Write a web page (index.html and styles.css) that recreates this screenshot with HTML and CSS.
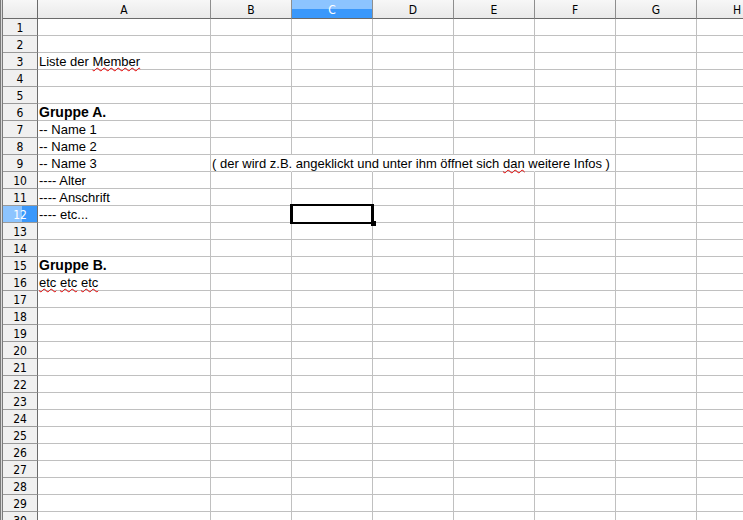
FILE: index.html
```html
<!DOCTYPE html>
<html lang="de">
<head>
    <meta charset="UTF-8">
    <title>Tabelle1</title>
    <link rel="stylesheet" href="styles.css">
</head>
<body>

<div class="sheet" id="sheet"></div>

<script>
    const spalten = ['A', 'B', 'C', 'D', 'E', 'F', 'G', 'H'];
    const anzahlZeilen = 30;
    const aktiveSpalte = 'C';
    const aktiveZeile = 12;

    const daten = {
        3: { A: 'Liste der <span class="spell">Member</span>' },
        6: { A: '<b class="gross">Gruppe A.</b>' },
        7: { A: '-- Name 1' },
        8: { A: '-- Name 2' },
        9: { A: '-- Name 3', B: '( der wird z.B. angeklickt und unter ihm öffnet sich <span class="spell">dan</span> weitere Infos )' },
        10: { A: '---- Alter' },
        11: { A: '---- Anschrift' },
        12: { A: '---- etc...' },
        15: { A: '<b class="gross">Gruppe B.</b>' },
        16: { A: '<span class="spell">etc</span> <span class="spell">etc</span> <span class="spell">etc</span>' }
    };

    // Zellen, deren Text in die Nachbarn läuft
    const ueberlauf = { 9: ['B', 'C', 'D', 'E'] };

    function zeichneTabelle() {
        const sheet = document.getElementById('sheet');
        let html = '<div class="kopf ecke"></div>';

        spalten.forEach(s => {
            html += `<div class="kopf spaltenkopf${s === aktiveSpalte ? ' aktiv' : ''}">${s}</div>`;
        });

        for (let z = 1; z <= anzahlZeilen; z++) {
            html += `<div class="kopf zeilenkopf${z === aktiveZeile ? ' aktiv' : ''}">${z}</div>`;
            spalten.forEach(s => {
                const inhalt = (daten[z] && daten[z][s]) || '';
                let klassen = 'zelle';
                if (ueberlauf[z] && ueberlauf[z].includes(s)) klassen += ' offen';
                if (inhalt && ueberlauf[z] && ueberlauf[z][0] === s) klassen += ' vorne';
                if (z === aktiveZeile && s === aktiveSpalte) klassen += ' markiert';
                html += `<div class="${klassen}">${inhalt}</div>`;
            });
        }

        sheet.innerHTML = html;
    }

    zeichneTabelle();
</script>

</body>
</html>
```

FILE: styles.css
```css
html, body {
    margin: 0;
    padding: 0;
    background-color: #ffffff;
    overflow: hidden;
    height: 520px;
}
.sheet {
    display: grid;
    grid-template-columns: 35px 173px repeat(7, 81px);
    grid-template-rows: 19px repeat(30, 17px);
    border-left: 3px double #7a7a7a;
    background-color: #d8d8d8;
    width: max-content;
}
.kopf {
    box-sizing: border-box;
    font-family: "DejaVu Sans Condensed", "DejaVu Sans", sans-serif;
    font-size: 12px;
    color: #000;
    display: flex;
    align-items: center;
    justify-content: center;
    background: linear-gradient(#f7f7f7, #e9e9e9);
}
.spaltenkopf {
    border-right: 1px solid #8e8e8e;
    border-bottom: 1px solid #6a6a6a;
    padding-top: 1px;
}
.ecke {
    border-right: 1px solid #6a6a6a;
    border-bottom: 1px solid #6a6a6a;
}
.zeilenkopf {
    background: #f0f0f0;
    border-right: 1px solid #6a6a6a;
    border-bottom: 1px solid #9a9a9a;
    padding-top: 1px;
}
.spaltenkopf.aktiv {
    background: linear-gradient(#8cc4ff 0, #8cc4ff 50%, #3a98fb 50%, #3a98fb 100%);
    color: #fff;
}
.zeilenkopf.aktiv {
    background: linear-gradient(90deg, #8cc4ff 0, #8cc4ff 55%, #3a98fb 55%, #3a98fb 100%);
    color: #fff;
}
.zelle {
    box-sizing: border-box;
    background-color: #fff;
    border-right: 1px solid #c0c0c0;
    border-bottom: 1px solid #c0c0c0;
    padding: 0 1px;
    font-family: "Liberation Sans", Arial, sans-serif;
    font-size: 13px;
    line-height: 17px;
    color: #000;
    white-space: nowrap;
    overflow: visible;
}
.zelle.offen {
    border-right-color: #fff;
}
.zelle.vorne {
    position: relative;
    z-index: 1;
}
.gross {
    font-size: 14px;
}
.spell {
    position: relative;
    z-index: 1;
    text-decoration: underline wavy #e00000;
    text-decoration-thickness: 1px;
    text-underline-offset: 1px;
}
.markiert {
    position: relative;
    z-index: 2;
}
.markiert::after {
    content: "";
    position: absolute;
    left: -2px;
    top: -2px;
    right: -2px;
    bottom: -2px;
    border-style: solid;
    border-color: #000;
    border-width: 2px 3px 2px 3px;
}
.markiert::before {
    content: "";
    position: absolute;
    right: -4px;
    bottom: -4px;
    width: 5px;
    height: 5px;
    background-color: #000;
    z-index: 1;
}
```
